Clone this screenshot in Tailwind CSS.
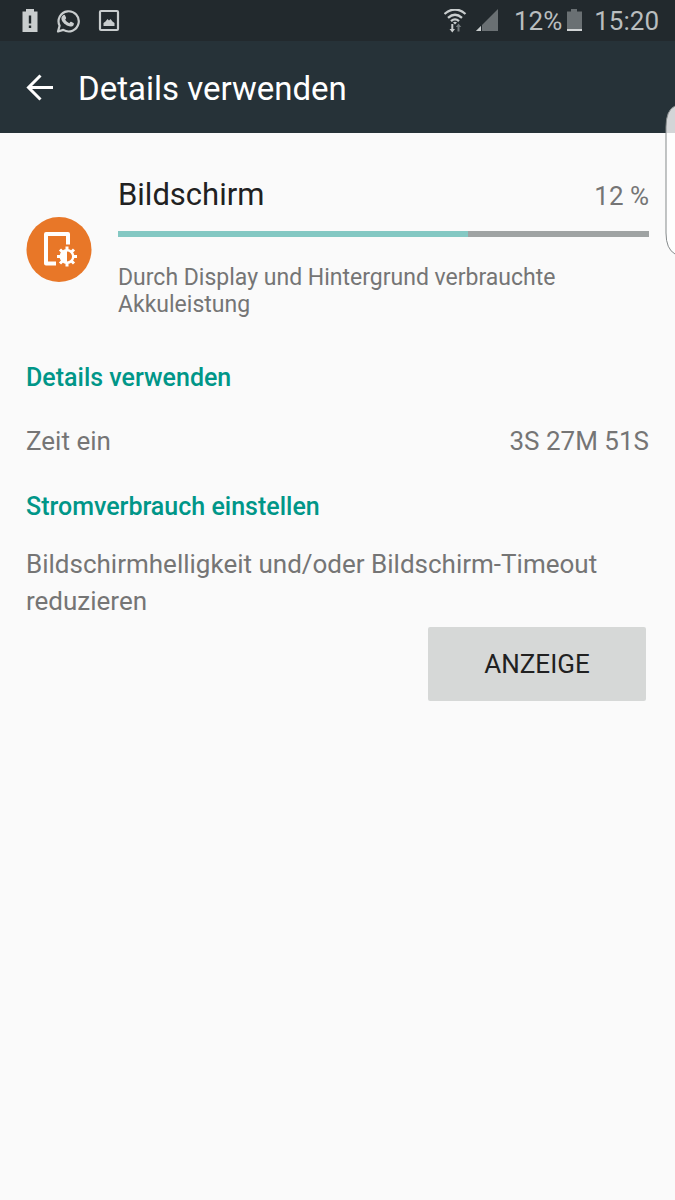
<!DOCTYPE html>
<html lang="de">
<head>
<meta charset="utf-8">
<meta name="viewport" content="width=device-width, initial-scale=1">
<title>Details verwenden</title>
<script src="https://cdn.jsdelivr.net/npm/@tailwindcss/browser@4"></script>
</head>
<body class="relative min-h-screen overflow-x-hidden bg-[#fafafa] font-['Roboto',sans-serif] text-[#757575]">
  <div class="flex h-[41px] items-center justify-between bg-[#22292d] pr-4 pl-[22px] text-[#b9bdbf]">
    <div class="flex items-center gap-4">
      <svg class="mr-[2px] h-6 w-4" viewBox="0 0 16 24" aria-hidden="true"><path fill="#c9cdce" fill-rule="evenodd" d="M4 0h8v2.500h3.500V23H.5V2.500H4zM6.800 6.500v8h2.400v-8zM6.800 16.500v2.500h2.400v-2.500z"/></svg>
      <svg class="h-6 w-6" viewBox="0 0 24 24" aria-hidden="true"><path fill="none" stroke="#c9cdce" stroke-width="2.200" stroke-linejoin="round" d="M2 22.500l1.600-5.700A10.100 10.100 0 1 1 7.300 20.900z"/><path fill="#c9cdce" d="M7.500 6c.8-.4 1.400 0 1.600.5l1 2.200c.1.500 0 .8-.9 1.800.8 1.600 2.400 3 4.200 3.700.9-1.200 1.300-1.600 1.800-1.400l2.300 1.100c.5.300.4 1.100.1 2-.5 1.200-2.200 1.800-3.500 1.600-4.400-.8-8.100-4.300-8.700-7.500-.2-1.600.8-3.400 2.100-4z"/></svg>
      <svg class="h-6 w-6" viewBox="0 0 24 24" aria-hidden="true"><rect x="4" y="2" width="18" height="19" rx="1" fill="none" stroke="#c9cdce" stroke-width="2.200"/><path fill="#c9cdce" d="M7.500 17v-3l2-1.500 2-2.500 1.500 1.500 1.500-1.500 2 2.500 2 1.500v3z"/></svg>
    </div>
    <div class="flex items-center text-[26px] leading-8">
      <svg class="mr-2 h-6 w-6" viewBox="0 0 24 24" aria-hidden="true"><g fill="none" stroke="#c9cdce" stroke-width="2.300"><path d="M.5 5Q11-4 21.500 5"/><path d="M4 8.800q7-6.200 14 0"/><path d="M7 12.200q4-3.600 8 0"/></g><path fill="#c9cdce" d="M9 13.500q2-1.500 4 0l-2 2zM7.300 15h2v5H11l-2.700 3.500L5.500 20h1.800z"/><path fill="#737a7d" d="M13.500 22.500h2V18h1.800l-2.800-3.500-2.700 3.500h1.700z"/></svg>
      <svg class="mr-[14px] h-6 w-6" viewBox="0 0 24 24" aria-hidden="true"><path fill="#6a7073" d="M22 0v22H0z"/><path fill="#c9cdce" d="M5 17v5H0z"/><path stroke="#22292d" d="M5.500 16v7"/></svg>
      <span>12%</span>
      <svg class="mr-3 ml-1 h-6 w-4" viewBox="0 0 16 24" aria-hidden="true"><path fill="#6a7073" d="M5 0h6v2.500h5V22H1V2.500h4z"/><path fill="#d0d3d4" d="M1 20h15v2H1z"/></svg>
      <span>15:20</span>
    </div>
  </div>

  <header class="flex h-[92px] items-center gap-6 bg-[#263238] pl-[26px] text-white">
    <button type="button" aria-label="Zurück">
      <svg class="h-7 w-7" viewBox="0 0 28 28" aria-hidden="true"><path fill="none" stroke="currentColor" stroke-width="3" d="M14.500 2.500L2.500 14.500l12 12M2.500 14.500H27"/></svg>
    </button>
    <h1 class="pt-1 text-[33px] leading-10">Details verwenden</h1>
  </header>

  <main class="px-[26px] pt-10">
    <section class="flex items-start gap-[26px]">
      <svg class="mt-11 h-[66px] w-[66px] shrink-0" viewBox="0 0 66 66" aria-hidden="true">
        <circle cx="33" cy="32.500" r="32.500" fill="#e87728"/>
        <path d="M42 27.500V17H20v29.500h10" fill="none" stroke="#fff" stroke-width="4" stroke-linejoin="round"/>
        <g stroke="#fff" stroke-width="3"><path d="M41 29.500v20M31 39.500h20M34 32.500l14 14M48 32.500l-14 14"/></g>
        <circle cx="41" cy="39.500" r="7.500" fill="#fff"/>
        <path d="M41 34.500a5 5 0 0 1 0 10z" fill="#e87728"/>
      </svg>
      <div class="min-w-0 flex-1">
        <div class="flex items-baseline justify-between">
          <h2 class="text-[31px] leading-11 text-[#212121]">Bildschirm</h2>
          <span class="text-[26px]">12 %</span>
        </div>
        <div class="mt-[14px] h-[6px] bg-[#9fa3a3]" role="progressbar" aria-label="Bildschirm" aria-valuenow="12" aria-valuemin="0" aria-valuemax="100">
          <div class="h-full bg-[#84c8c3]" style="width:66%"></div>
        </div>
        <p class="mt-[27px] text-[23px] leading-[27px]">Durch Display und Hintergrund verbrauchte Akkuleistung</p>
      </div>
    </section>
    <h3 class="mt-11 text-[25px] leading-8 font-medium text-[#009688]">Details verwenden</h3>
    <div class="mt-[31px] flex justify-between text-[26px] leading-8"><span>Zeit ein</span><span>3S 27M 51S</span></div>
    <h3 class="mt-[34px] text-[25px] leading-8 font-medium text-[#009688]">Stromverbrauch einstellen</h3>
    <p class="mt-[23px] text-[26px] leading-[37px]">Bildschirmhelligkeit und/oder Bildschirm-Timeout reduzieren</p>
    <div class="mt-[7px] flex justify-end pr-[3px]">
      <button type="button" class="h-[74px] w-[218px] rounded-xs bg-[#d6d8d7] text-[26px] text-[#212121]">ANZEIGE</button>
    </div>
  </main>

  <svg class="absolute top-[105px] right-0 h-[150px] w-[10px]" viewBox="0 0 10 150" aria-hidden="true">
    <path fill="#d3d5d7" d="M10 1Q1 5 1 22V28H10z"/>
    <path fill="#fefefe" d="M1 28V128Q1 144 10 149V28z"/>
    <path fill="none" stroke="#858a8b" d="M10 1Q1 5 1 22V128Q1 144 10 149"/>
  </svg>
</body>
</html>
